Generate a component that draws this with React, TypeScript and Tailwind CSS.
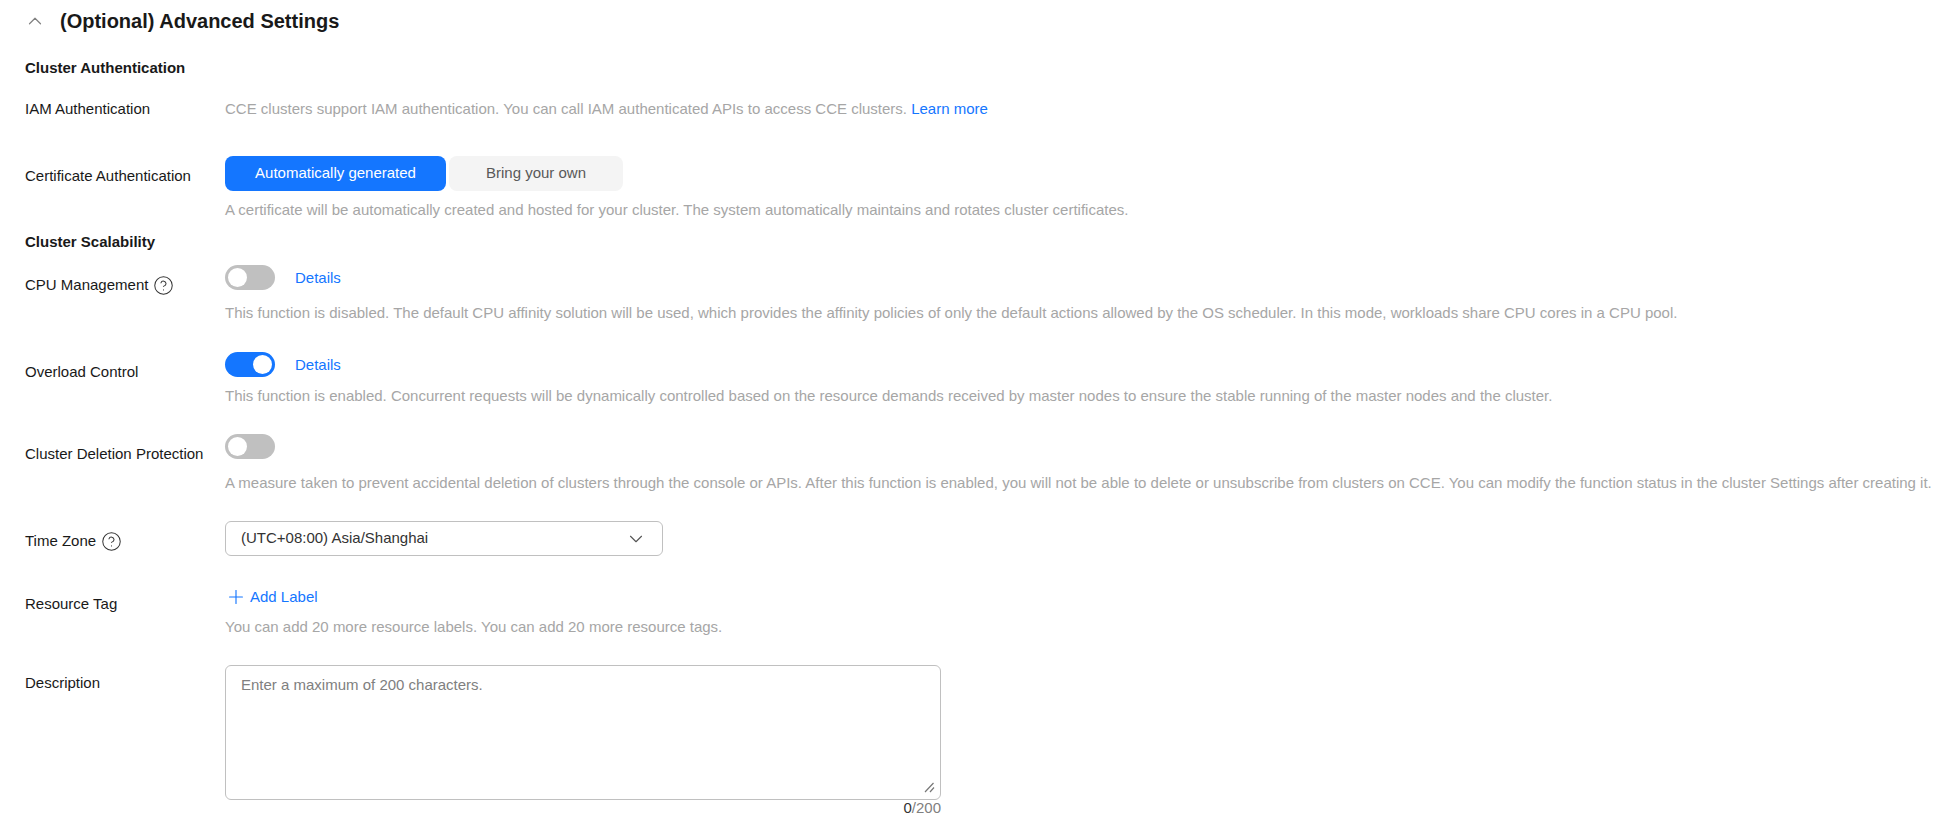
import { ChevronDown, ChevronUp, CircleHelp, Plus } from 'lucide-react';
import type { ReactNode } from 'react';

function Toggle({ on = false }: { on?: boolean }) {
  return (
    <span
      className={`flex h-[25px] w-[50px] items-center rounded-full p-[3px] ${
        on ? 'justify-end bg-[#1476ff]' : 'justify-start bg-[#c0c0c0]'
      }`}
    >
      <span className="size-[19px] rounded-full bg-white" />
    </span>
  );
}

function Row({
  label,
  help,
  labelPad,
  className,
  children,
}: {
  label: string;
  help?: boolean;
  labelPad: string;
  className: string;
  children: ReactNode;
}) {
  return (
    <div className={`flex ${className}`}>
      <div className={`flex h-fit w-[200px] shrink-0 items-center gap-[5px] leading-5 ${labelPad}`}>
        {label}
        {help && <CircleHelp size={21} strokeWidth={1.15} className="-my-[1px] text-[#333]" />}
      </div>
      <div className="min-w-0 flex-1">{children}</div>
    </div>
  );
}

function Hint({ className, children }: { className: string; children: ReactNode }) {
  return <div className={`whitespace-nowrap leading-5 text-[#a6a6a6] ${className}`}>{children}</div>;
}

function Details() {
  return <a className="leading-5 text-[#1476ff]">Details</a>;
}

export default function App() {
  return (
    <div className="h-[827px] overflow-hidden bg-white pl-[25px] font-['Liberation_Sans',Arial,sans-serif] text-[15px] text-[#191919]">
      <div className="flex h-[42px] items-center">
        <ChevronUp size={22} strokeWidth={1.3} className="-ml-[1px] text-[#808080]" />
        <h2 className="ml-[14px] text-[20px] font-bold">(Optional) Advanced Settings</h2>
      </div>

      <h3 className="mt-[16px] font-bold leading-5">Cluster Authentication</h3>

      <Row label="IAM Authentication" labelPad="" className="mt-[21px]">
        <div className="whitespace-nowrap leading-5 text-[#a6a6a6]">
          CCE clusters support IAM authentication. You can call IAM authenticated APIs to access CCE clusters.{' '}
          <a className="text-[#1476ff]">Learn more</a>
        </div>
      </Row>

      <Row label="Certificate Authentication" labelPad="pt-[10px]" className="mt-[37px]">
        <div className="flex gap-[3px]">
          <button className="h-[35px] w-[221px] rounded-lg bg-[#1476ff] text-white">Automatically generated</button>
          <button className="h-[35px] w-[174px] rounded-lg bg-[#f4f4f4] text-[#595959]">Bring your own</button>
        </div>
        <Hint className="mt-[9px]">
          A certificate will be automatically created and hosted for your cluster. The system automatically maintains
          and rotates cluster certificates.
        </Hint>
      </Row>

      <h3 className="mt-[12px] font-bold leading-5">Cluster Scalability</h3>

      <Row label="CPU Management" help labelPad="pt-[10px]" className="mt-[13px]">
        <div className="flex items-center gap-[20px]">
          <Toggle />
          <Details />
        </div>
        <Hint className="mt-[13px]">
          This function is disabled. The default CPU affinity solution will be used, which provides the affinity
          policies of only the default actions allowed by the OS scheduler. In this mode, workloads share CPU cores in a
          CPU pool.
        </Hint>
      </Row>

      <Row label="Overload Control" labelPad="pt-[10px]" className="mt-[29px]">
        <div className="flex items-center gap-[20px]">
          <Toggle on />
          <Details />
        </div>
        <Hint className="mt-[9px]">
          This function is enabled. Concurrent requests will be dynamically controlled based on the resource demands
          received by master nodes to ensure the stable running of the master nodes and the cluster.
        </Hint>
      </Row>

      <Row label="Cluster Deletion Protection" labelPad="pt-[10px]" className="mt-[28px]">
        <Toggle />
        <Hint className="mt-[14px]">
          A measure taken to prevent accidental deletion of clusters through the console or APIs. After this function is
          enabled, you will not be able to delete or unsubscribe from clusters on CCE. You can modify the function
          status in the cluster Settings after creating it.
        </Hint>
      </Row>

      <Row label="Time Zone" help labelPad="pt-[10px]" className="mt-[28px]">
        <div className="flex h-[35px] w-[438px] items-center justify-between rounded-md border border-[#c0c0c0] px-[15px]">
          <span className="text-[#333]">(UTC+08:00) Asia/Shanghai</span>
          <ChevronDown size={22} strokeWidth={1.2} className="text-[#555]" />
        </div>
      </Row>

      <Row label="Resource Tag" labelPad="pt-[7px]" className="mt-[31px]">
        <a className="flex h-5 items-center gap-[3px] leading-5 text-[#1476ff]">
          <Plus size={22} strokeWidth={1.25} />
          Add Label
        </a>
        <Hint className="mt-[10px]">You can add 20 more resource labels. You can add 20 more resource tags.</Hint>
      </Row>

      <Row label="Description" labelPad="pt-[8px]" className="mt-[28px]">
        <div className="relative w-[716px]">
          <textarea
            placeholder="Enter a maximum of 200 characters."
            className="block h-[135px] w-full resize-none rounded-md border border-[#c0c0c0] px-[15px] py-[9px] leading-5 placeholder:text-[#808080]"
          />
          {/* resize grip */}
          <svg width="12" height="12" viewBox="0 0 12 12" className="absolute right-[5px] bottom-[6px] text-[#777]">
            <path d="M1 10 9.5 1M6 10l4-4.5" fill="none" stroke="currentColor" strokeWidth="1.2" />
          </svg>
        </div>
        <div className="w-[716px] text-right leading-4 text-[#808080]">
          <span className="text-[#333]">0</span>/200
        </div>
      </Row>
    </div>
  );
}
